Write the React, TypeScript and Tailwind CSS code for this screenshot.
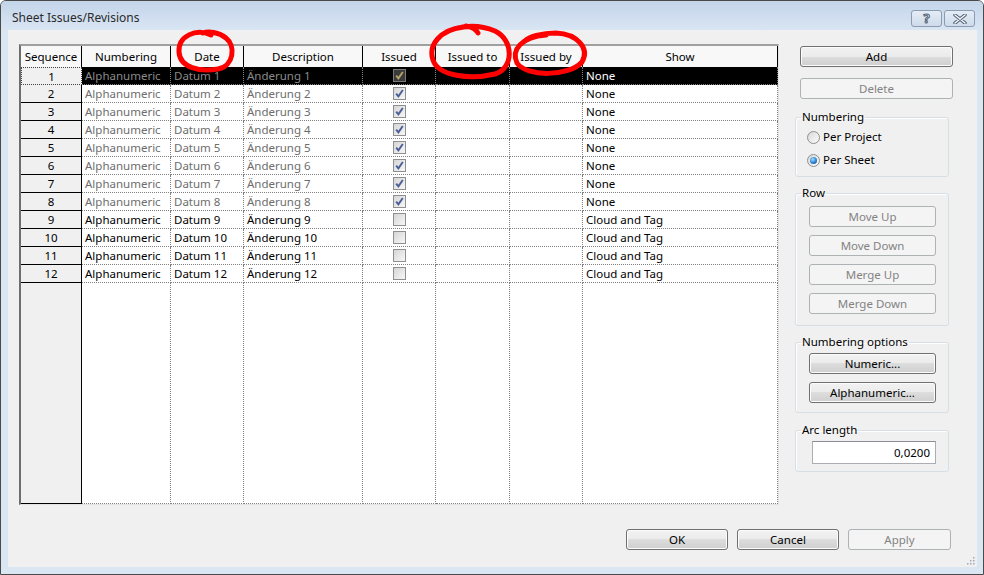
import clsx from 'clsx';

const COLS = [89, 73, 119, 73, 74, 73, 195];
const HEADERS = ['Numbering', 'Date', 'Description', 'Issued', 'Issued to', 'Issued by', 'Show'];

const ROWS = Array.from({ length: 12 }, (_, i) => ({
  n: i + 1,
  issued: i < 8,
  show: i < 8 ? 'None' : 'Cloud and Tag',
}));

const btnOn =
  'border-[#707070] bg-[linear-gradient(#f2f2f2_0%,#ebebeb_50%,#dddddd_50%,#cfcfcf_100%)] text-black shadow-[inset_0_0_0_1px_#fcfcfc]';
const btnOff = 'border-[#adb2b5] bg-[#f4f4f4] text-[#838383]';

function WinButton({ label, disabled, className }: { label: string; disabled?: boolean; className?: string }) {
  return (
    <button
      type="button"
      className={clsx('h-[21px] shrink-0 rounded-[3px] border text-[11.5px] leading-none', disabled ? btnOff : btnOn, className)}
    >
      {label}
    </button>
  );
}

function Check({ checked, selected }: { checked: boolean; selected?: boolean }) {
  return (
    <div
      className={clsx(
        'flex h-[13px] w-[13px] items-center justify-center border',
        selected
          ? 'border-[#7a7a7a] bg-[#3a3a3a]'
          : 'border-[#8f8f8f] bg-[linear-gradient(135deg,#d6d6d6,#f7f7f7)]'
      )}
    >
      {checked && (
        <svg width="11" height="11" viewBox="0 0 11 11">
          <path
            d="M2.2 5.6 L4.4 8.4 L8.8 2"
            fill="none"
            stroke={selected ? '#b5a16a' : '#4a5f97'}
            strokeWidth="1.9"
          />
        </svg>
      )}
    </div>
  );
}

function Radio({ on, label }: { on?: boolean; label: string }) {
  return (
    <div className="flex h-[16px] items-center">
      <div className="ml-[6px] flex h-[13px] w-[13px] items-center justify-center rounded-full border border-[#8e8f8f] bg-[linear-gradient(135deg,#d9d9d9,#fbfbfb)]">
        {on && (
          <div className="h-[7px] w-[7px] rounded-full bg-[radial-gradient(circle_at_40%_35%,#9fe0ff,#2b7fd0_55%,#14407a)]" />
        )}
      </div>
      <span className="ml-[3px] text-[11.5px] text-black">{label}</span>
    </div>
  );
}

function Group({ title, className, children }: { title: string; className?: string; children: React.ReactNode }) {
  return (
    <fieldset
      className={clsx(
        'ml-[1px] w-[154px] rounded-[3px] border border-[#d5dfe5] pl-[5px] shadow-[inset_1px_1px_0_#ffffff]',
        className
      )}
    >
      <legend className="px-[1px] text-[11.5px] leading-[16px] text-black">{title}</legend>
      {children}
    </fieldset>
  );
}

function Grid() {
  return (
    <div className="flex h-[461px] w-[760px] shrink-0 flex-col border-t-2 border-r border-b border-l-2 border-t-[#a0a0a0] border-r-[#e3e3e3] border-b-[#e3e3e3] border-l-[#6e6e6e] bg-white text-[11.5px]">
      {/* header */}
      <div className="flex h-[21px] shrink-0 bg-[#f8f8f8]">
        <div className="w-[61px] shrink-0 border-r border-black text-center leading-[21px]">Sequence</div>
        {HEADERS.map((h, i) => (
          <div
            key={h}
            style={{ width: COLS[i] }}
            className="shrink-0 border-r border-black text-center leading-[21px]"
          >
            {h}
          </div>
        ))}
      </div>

      {ROWS.map((r, ri) => {
        const sel = ri === 0;
        const muted = r.issued;
        const cells = ['Alphanumeric', `Datum ${r.n}`, `Änderung ${r.n}`];
        return (
          <div key={r.n} className="flex h-[18px] shrink-0">
            <div
              className={clsx(
                'w-[61px] shrink-0 bg-[#f0f0f0] text-center leading-[17px]',
                sel ? 'border border-dotted border-[#444]' : 'border-r border-b border-black'
              )}
            >
              {r.n}
            </div>
            {cells.map((c, ci) => (
              <div
                key={ci}
                style={{ width: COLS[ci] }}
                className={clsx(
                  'shrink-0 truncate border-r border-b border-dotted border-[#808080] pl-[3px] leading-[17px]',
                  sel ? 'bg-black text-[#8a8a8a]' : muted ? 'text-[#6d6d6d]' : 'text-black'
                )}
              >
                {c}
              </div>
            ))}
            <div
              style={{ width: COLS[3] }}
              className={clsx(
                'flex shrink-0 items-center justify-center border-r border-b border-dotted border-[#808080]',
                sel && 'bg-black'
              )}
            >
              <Check checked={r.issued} selected={sel} />
            </div>
            {[4, 5].map((ci) => (
              <div
                key={ci}
                style={{ width: COLS[ci] }}
                className={clsx('shrink-0 border-r border-b border-dotted border-[#808080]', sel && 'bg-black')}
              />
            ))}
            <div
              style={{ width: COLS[6] }}
              className={clsx(
                'shrink-0 border-r border-b border-dotted border-[#808080] pl-[3px] leading-[17px]',
                sel ? 'bg-black text-white' : 'text-black'
              )}
            >
              {r.show}
            </div>
          </div>
        );
      })}

      {/* empty area */}
      <div className="flex flex-1">
        <div className="w-[61px] shrink-0 border-r border-b border-black bg-[#f0f0f0]" />
        {COLS.map((w, i) => (
          <div key={i} style={{ width: w }} className="shrink-0 border-r border-b border-dotted border-[#808080]" />
        ))}
      </div>
    </div>
  );
}

function RightPanel() {
  return (
    <div className="ml-[15px] flex w-[159px] flex-col">
      <WinButton label="Add" className="mt-[2px] ml-[6px] w-[153px]" />
      <WinButton label="Delete" disabled className="mt-[11px] ml-[6px] w-[153px]" />

      <Group title="Numbering" className="mt-[10px] pb-[8px]">
        <div className="mt-[4px]">
          <Radio label="Per Project" />
        </div>
        <div className="mt-[7px]">
          <Radio label="Per Sheet" on />
        </div>
      </Group>

      <Group title="Row" className="mt-[8px] pb-[11px]">
        <div className="mt-[5px] ml-[8px] flex flex-col gap-[8px]">
          <WinButton label="Move Up" disabled className="w-[127px]" />
          <WinButton label="Move Down" disabled className="w-[127px]" />
          <WinButton label="Merge Up" disabled className="w-[127px]" />
          <WinButton label="Merge Down" disabled className="w-[127px]" />
        </div>
      </Group>

      <Group title="Numbering options" className="mt-[8px] pb-[9px]">
        <div className="mt-[3px] ml-[8px] flex flex-col gap-[8px]">
          <WinButton label="Numeric..." className="w-[127px]" />
          <WinButton label="Alphanumeric..." className="w-[127px]" />
        </div>
      </Group>

      <Group title="Arc length" className="mt-[9px] pb-[7px]">
        <div className="mt-[3px] ml-[11px] flex h-[23px] w-[124px] items-center justify-end border border-[#abadb3] border-t-[#8a8d93] bg-white pr-[5px] text-[11.5px] text-black">
          0,0200
        </div>
      </Group>
    </div>
  );
}

function Scribbles() {
  return (
    <svg className="pointer-events-none absolute inset-0" width="984" height="575" viewBox="0 0 984 575">
      <g fill="none" stroke="#ff0000" strokeWidth="5" strokeLinecap="round" strokeLinejoin="round">
        <path d="M211 35 C196 28 178 36 179 52 C180 68 200 72 218 69 C234 66 236 46 226 38 C219 32 208 31 203 33" />
        <path d="M463 27 C440 30 428 45 433 60 C438 76 470 80 495 74 C514 68 514 40 495 31 C483 26 470 25 458 28 M466 26 C472 27 476 29 478 33" />
        <path d="M546 35 C521 37 511 50 517 63 C526 77 569 77 582 62 C590 48 577 34 556 33 C541 33 529 37 525 41" />
      </g>
    </svg>
  );
}

export default function App() {
  return (
    <div className="relative h-[575px] w-[984px] overflow-hidden bg-white font-['Noto_Sans',sans-serif]">
      <div className="flex h-[575px] w-[984px] flex-col rounded-t-[6px] border border-[#4a4a4a] bg-[#dbe6f3]">
        {/* title bar */}
        <div className="flex h-[29px] shrink-0 items-start rounded-t-[5px] bg-[linear-gradient(#c3d5ea,#d9e5f3)]">
          <span className="mt-[9px] ml-[11px] text-[12px] leading-[16px] text-[#2b2b2b]">Sheet Issues/Revisions</span>
          <div className="mt-[9px] mr-[8px] ml-auto flex gap-[2px]">
            <div className="flex h-[17px] w-[31px] items-center justify-center rounded-[3px] border border-[#8a9bb2] bg-[linear-gradient(#e4ecf6,#cfdbea)] text-[13px] leading-none font-bold text-white [-webkit-text-stroke:1px_#4d5e75]">
              ?
            </div>
            <div className="flex h-[17px] w-[31px] items-center justify-center rounded-[3px] border border-[#8a9bb2] bg-[linear-gradient(#e4ecf6,#cfdbea)]">
              <svg width="14" height="10" viewBox="0 0 14 10">
                <path d="M2 1 L12 9 M12 1 L2 9" stroke="#4d5e75" strokeWidth="3.4" strokeLinecap="round" />
                <path d="M2 1 L12 9 M12 1 L2 9" stroke="#ffffff" strokeWidth="1.4" strokeLinecap="round" />
              </svg>
            </div>
          </div>
        </div>

        {/* client */}
        <div className="mr-[6px] mb-[7px] ml-[7px] flex flex-1 flex-col bg-[#f0f0f0] pt-[14px] pl-[11px]">
          <div className="flex">
            <Grid />
            <RightPanel />
          </div>

          <div className="mt-[24px] flex justify-end gap-[9px] pr-[26px]">
            <WinButton label="OK" className="w-[102px]" />
            <WinButton label="Cancel" className="w-[102px]" />
            <WinButton label="Apply" disabled className="w-[103px]" />
          </div>

          <div className="flex flex-1 items-end justify-end pr-[2px] pb-[2px]">
            <svg width="10" height="10" viewBox="0 0 10 10">
              {[
                [8, 2],
                [8, 5],
                [5, 5],
                [8, 8],
                [5, 8],
                [2, 8],
              ].map(([x, y], i) => (
                <rect key={i} x={x} y={y} width="1.5" height="1.5" fill="#a0a8b4" />
              ))}
            </svg>
          </div>
        </div>
      </div>
      <Scribbles />
    </div>
  );
}
